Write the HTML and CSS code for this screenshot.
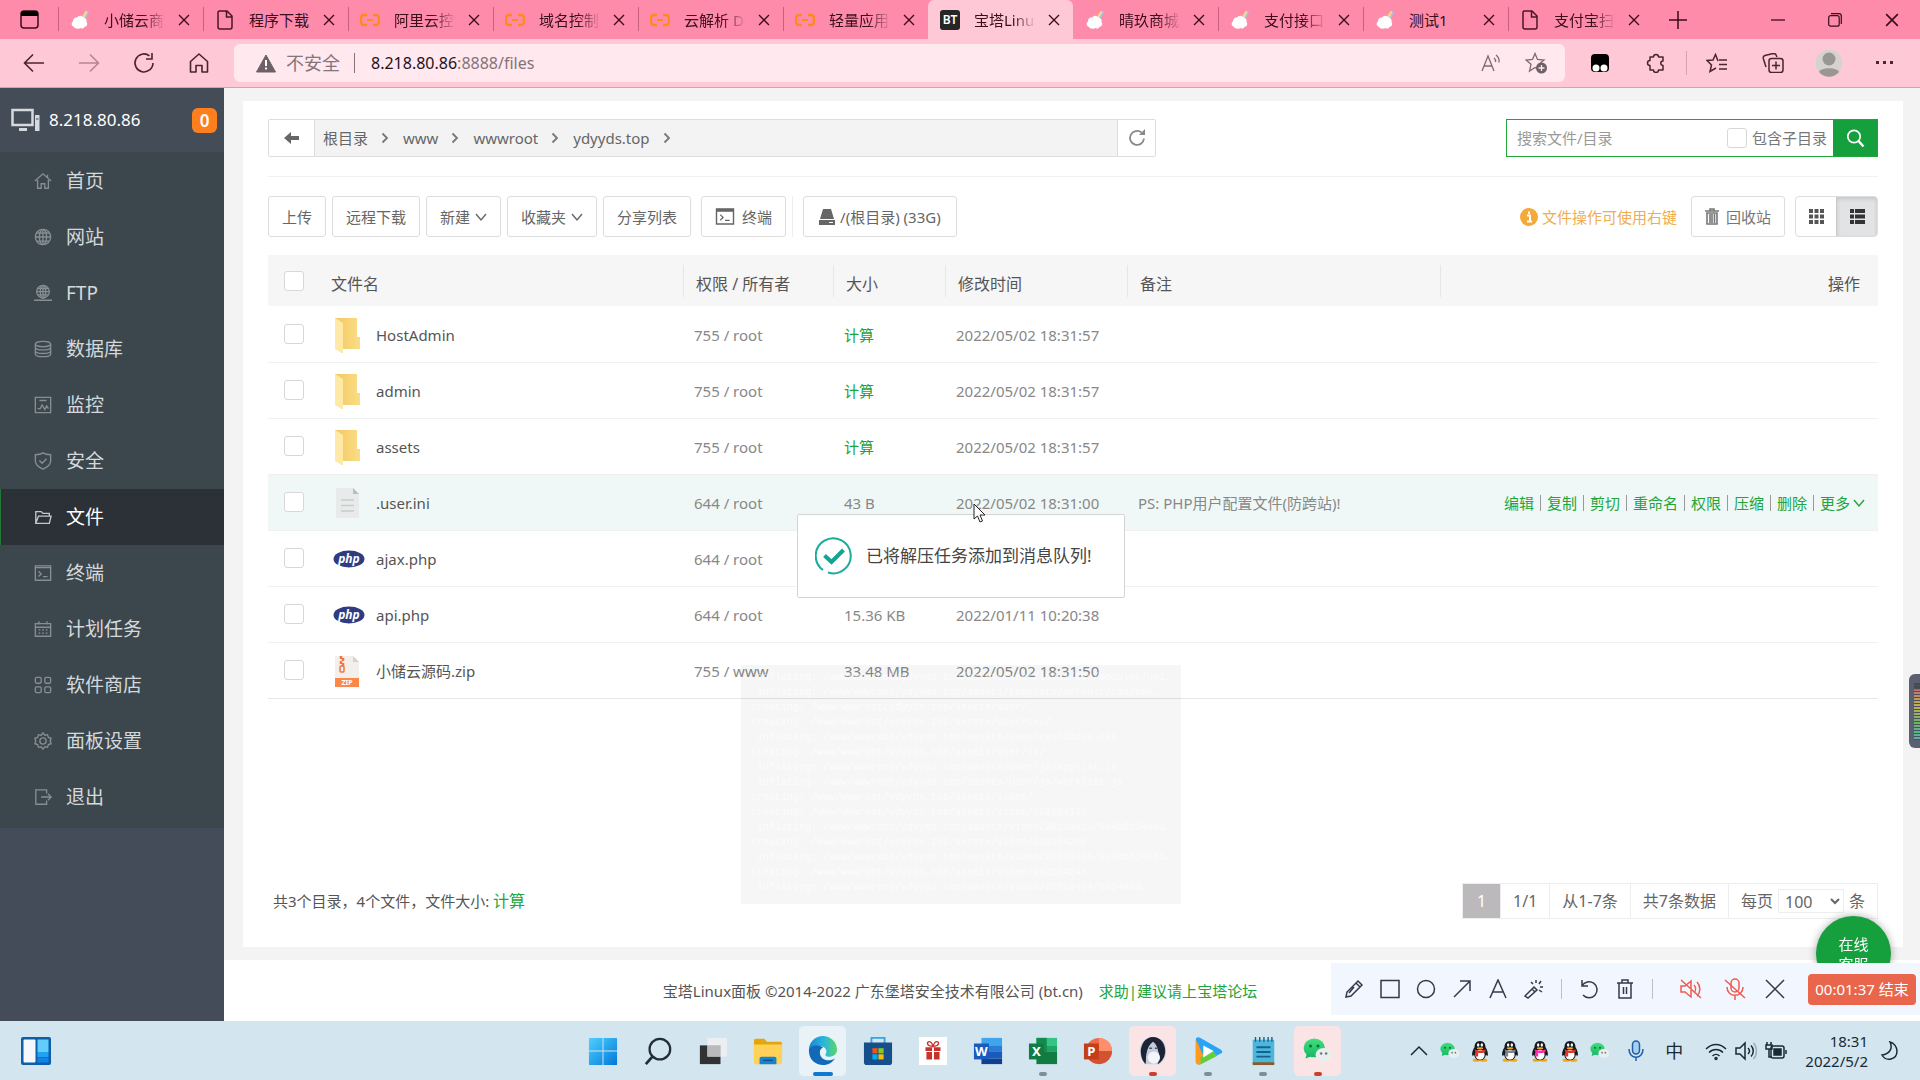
FILE: index.html
```html
<!DOCTYPE html>
<html lang="zh-CN">
<head>
<meta charset="utf-8">
<meta name="viewport" content="width=device-width, initial-scale=1">
<title>宝塔Linux面板</title>
<link rel="stylesheet" href="styles.css">
</head>
<body>
<svg class="defs" aria-hidden="true">
  <defs>
    <linearGradient id="g-win" x1="0" y1="0" x2="1" y2="1"><stop offset="0" stop-color="#4fd0ff"/><stop offset="1" stop-color="#0078d8"/></linearGradient>
    <linearGradient id="g-edge" x1="0" y1="0" x2="1" y2="0"><stop offset="0" stop-color="#1784d8"/><stop offset=".55" stop-color="#2cb8d8"/><stop offset="1" stop-color="#5bd66b"/></linearGradient>
    <linearGradient id="g-folder" x1="0" y1="0" x2="1" y2="0"><stop offset="0" stop-color="#f3c963"/><stop offset="1" stop-color="#fbdc85"/></linearGradient>
    <linearGradient id="g-wx" x1="0" y1="0" x2="0" y2="1"><stop offset="0" stop-color="#3fe07c"/><stop offset="1" stop-color="#19b868"/></linearGradient>
  </defs>
  <symbol id="i-cloud" viewBox="0 0 20 20"><path d="M10 9 15 1l1.500 0-4 9z" fill="#ffb27a"/><path d="M11.500 9 16 1l1.500.5-4 8.500z" fill="#ffe08a"/><path d="M13 9.500 17.500 1.500l1.500.5-4 8z" fill="#9cc8f5"/><path d="M4 17a3 3 0 0 1-1-5.500 3.500 3.500 0 0 1 4-4 4 4 0 0 1 6.500 0 3.500 3.500 0 0 1 3 4.500 3 3 0 0 1-2 5 3 3 0 0 1-4 1 4 4 0 0 1-3.500.5A3 3 0 0 1 4 17z" fill="#fff"/></symbol>
  <symbol id="i-doc" viewBox="0 0 20 20"><path d="M4 1h8l5 5v11a2 2 0 0 1-2 2H5a2 2 0 0 1-2-2V2zM11.500 1v6H17" fill="none" stroke="#4a1626" stroke-width="1.500"/></symbol>
  <symbol id="i-ali" viewBox="0 0 20 14"><path d="M7 2H4a3 3 0 0 0-3 3v4a3 3 0 0 0 3 3h3M13 2h3a3 3 0 0 1 3 3v4a3 3 0 0 1-3 3h-3" fill="none" stroke="#ff8a1c" stroke-width="2.400"/><path d="M7 7h6" stroke="#ff8a1c" stroke-width="2"/></symbol>
  <symbol id="i-x" viewBox="0 0 12 12"><path d="m1 1 10 10M11 1 1 11" fill="none" stroke="currentColor" stroke-width="1.400"/></symbol>
  <symbol id="i-chev" viewBox="0 0 12 12"><path d="m1 3 5 6 5-6" fill="none" stroke="currentColor" stroke-width="1.400"/></symbol>
  <symbol id="i-right" viewBox="0 0 8 12"><path d="m1.500 1.500 4.500 4.500-4.500 4.500" fill="none" stroke="currentColor" stroke-width="1.800"/></symbol>
  <symbol id="i-term" viewBox="0 0 20 18"><path d="M1 1h18v16H1z" fill="none" stroke="currentColor" stroke-width="1.500"/><path d="M1 1h18v3H1z" fill="currentColor"/><path d="m5 7 3 3-3 3M10 13h5" fill="none" stroke="currentColor" stroke-width="1.300"/></symbol>
  <symbol id="i-folder" viewBox="0 0 28 36"><path d="M2 1h22v19h3v12H5z" fill="url(#g-folder)"/><path d="m2 1 8 5v31l-8-5z" fill="#ffe9a6"/></symbol>
  <symbol id="i-php" viewBox="0 0 32 20"><ellipse cx="16" cy="10" rx="15.500" ry="8.500" fill="#2f3c82"/><text x="16" y="14" text-anchor="middle" class="php-text">php</text></symbol>
  <symbol id="i-wechat" viewBox="0 0 24 22"><ellipse cx="9" cy="8.500" rx="8.500" ry="7.500" fill="url(#g-wx)"/><path d="m3 13-1 4 5-2z" fill="#19b868"/><circle cx="6" cy="7" r="1.200" fill="#0a6b3a"/><circle cx="12" cy="7" r="1.200" fill="#0a6b3a"/><ellipse cx="16.500" cy="14" rx="6.500" ry="5.500" fill="#e9eeee"/><circle cx="14.500" cy="13" r="1" fill="#777"/><circle cx="18.500" cy="13" r="1" fill="#777"/></symbol>
  <symbol id="i-qq" viewBox="0 0 20 24"><ellipse cx="6" cy="22" rx="4" ry="1.800" fill="#f2a81d"/><ellipse cx="14" cy="22" rx="4" ry="1.800" fill="#f2a81d"/><path d="M10 1c-4 0-6 3-6 7-2 3-3 6-2.500 9 .6.500 1.500 0 2-1 1 4 3 6 6.500 6s5.500-2 6.500-6c.5 1 1.400 1.500 2 1 .5-3-.5-6-2.500-9 0-4-2-7-6-7z" fill="#15181c"/><ellipse cx="10" cy="16" rx="5" ry="5.500" fill="#fff"/><ellipse cx="8" cy="5.500" rx="1.300" ry="1.900" fill="#fff"/><ellipse cx="12" cy="5.500" rx="1.300" ry="1.900" fill="#fff"/><ellipse cx="10" cy="9" rx="3.500" ry="1.200" fill="#f2a81d"/><path d="M4 10c3 2 9 2 12 0v3c-3 1.500-6 1.500-8 1v4H5v-5z" fill="currentColor"/></symbol>
</svg>

<header class="browser">
  <div class="tabstrip">
    <button class="tab-menu" aria-label="标签页菜单"><svg width="19" height="19" viewBox="0 0 19 19"><rect x="1" y="1" width="17" height="17" rx="3" fill="none" stroke="#3a0d1a" stroke-width="1.500"/><path d="M1 6V4a3 3 0 0 1 3-3h11a3 3 0 0 1 3 3v2z" fill="#000"/></svg></button>
    <nav class="tabs" aria-label="标签页">
      <div class="tab"><svg class="fav"><use href="#i-cloud"/></svg><span class="tab-title">小储云商城</span><button class="tab-close" aria-label="关闭"><svg><use href="#i-x"/></svg></button></div>
      <div class="tab"><svg class="fav"><use href="#i-doc"/></svg><span class="tab-title whole">程序下载</span><button class="tab-close" aria-label="关闭"><svg><use href="#i-x"/></svg></button></div>
      <div class="tab"><svg class="fav"><use href="#i-ali"/></svg><span class="tab-title">阿里云控制台</span><button class="tab-close" aria-label="关闭"><svg><use href="#i-x"/></svg></button></div>
      <div class="tab"><svg class="fav"><use href="#i-ali"/></svg><span class="tab-title">域名控制台</span><button class="tab-close" aria-label="关闭"><svg><use href="#i-x"/></svg></button></div>
      <div class="tab"><svg class="fav"><use href="#i-ali"/></svg><span class="tab-title">云解析 DNS</span><button class="tab-close" aria-label="关闭"><svg><use href="#i-x"/></svg></button></div>
      <div class="tab"><svg class="fav"><use href="#i-ali"/></svg><span class="tab-title">轻量应用服务器</span><button class="tab-close" aria-label="关闭"><svg><use href="#i-x"/></svg></button></div>
      <div class="tab active"><span class="fav bt">BT</span><span class="tab-title">宝塔Linux面板</span><button class="tab-close" aria-label="关闭"><svg><use href="#i-x"/></svg></button></div>
      <div class="tab"><svg class="fav"><use href="#i-cloud"/></svg><span class="tab-title">晴玖商城后台</span><button class="tab-close" aria-label="关闭"><svg><use href="#i-x"/></svg></button></div>
      <div class="tab"><svg class="fav"><use href="#i-cloud"/></svg><span class="tab-title">支付接口设置</span><button class="tab-close" aria-label="关闭"><svg><use href="#i-x"/></svg></button></div>
      <div class="tab"><svg class="fav"><use href="#i-cloud"/></svg><span class="tab-title whole">测试1</span><button class="tab-close" aria-label="关闭"><svg><use href="#i-x"/></svg></button></div>
      <div class="tab"><svg class="fav"><use href="#i-doc"/></svg><span class="tab-title">支付宝扫码</span><button class="tab-close" aria-label="关闭"><svg><use href="#i-x"/></svg></button></div>
    </nav>
    <button class="new-tab" aria-label="新建标签页"><svg width="18" height="18" viewBox="0 0 18 18"><path d="M9 0v18M0 9h18" stroke="#3a0d1a" stroke-width="1.500"/></svg></button>
    <div class="win-controls">
      <button aria-label="最小化"><svg width="14" height="14" viewBox="0 0 14 14"><path d="M0 7h14" stroke="#3a0d1a" stroke-width="1.300"/></svg></button>
      <button aria-label="还原"><svg width="14" height="14" viewBox="0 0 14 14"><rect x=".7" y="2.700" width="10.500" height="10.500" rx="2" fill="none" stroke="#3a0d1a" stroke-width="1.200"/><path d="M3 .7h8a2.300 2.300 0 0 1 2.300 2.300v8" fill="none" stroke="#3a0d1a" stroke-width="1.200"/></svg></button>
      <button aria-label="关闭窗口"><svg width="14" height="14"><use href="#i-x"/></svg></button>
    </div>
  </div>
  <div class="toolbar">
    <button class="nav-btn" aria-label="后退"><svg width="22" height="20" viewBox="0 0 22 20"><path d="M21 10H2M10 1.500 1.500 10l8.500 8.500" fill="none" stroke="#4a2430" stroke-width="1.600"/></svg></button>
    <button class="nav-btn dim" aria-label="前进"><svg width="22" height="20" viewBox="0 0 22 20"><path d="M1 10h19M12 1.500l8.500 8.500-8.500 8.500" fill="none" stroke="#4a2430" stroke-width="1.600"/></svg></button>
    <button class="nav-btn" aria-label="刷新"><svg width="22" height="22" viewBox="0 0 22 22"><path d="M20 11a9 9 0 1 1-3.500-7.200M19 1v6h-6" fill="none" stroke="#4a2430" stroke-width="1.600"/></svg></button>
    <button class="nav-btn" aria-label="主页"><svg width="20" height="20" viewBox="0 0 20 20"><path d="M1.500 8.500 10 1l8.500 7.500V19H13v-6.500H7V19H1.500z" fill="none" stroke="#4a2430" stroke-width="1.600" stroke-linejoin="round"/></svg></button>
    <div class="address">
      <svg width="20" height="19" viewBox="0 0 20 19"><path d="M10 1 19.500 18H.5z" fill="#6d6167" stroke="#6d6167" stroke-linejoin="round"/><path d="M10 6v6M10 13.500v2" stroke="#fff" stroke-width="2"/></svg>
      <span class="unsafe">不安全</span>
      <span class="url"><b>8.218.80.86</b>:8888/files</span>
      <button class="addr-btn" aria-label="朗读"><svg width="20" height="18" viewBox="0 0 20 18"><path d="m1 17 6-15 6 15M3 12h8M13 4a4 4 0 0 1 1.500 4M15 1a8 8 0 0 1 3 7.500" fill="none" stroke="#7d6a72" stroke-width="1.300"/></svg></button>
      <button class="addr-btn" aria-label="收藏"><svg width="22" height="22" viewBox="0 0 22 22"><path d="m10 1.500 2.500 6 6.500.5-5 4.300L15.500 19 10 15.500 4.500 19 6 12.300 1 8l6.500-.5z" fill="none" stroke="#7d6a72" stroke-width="1.300"/><circle cx="16.500" cy="16" r="5.500" fill="#6d6167"/><path d="M16.500 13v6M13.500 16h6" stroke="#ffe8ee" stroke-width="1.300"/></svg></button>
    </div>
    <div class="ext">
      <button aria-label="扩展"><svg width="20" height="20" viewBox="0 0 20 20"><rect x="1" y="1" width="18" height="18" rx="4" fill="#000"/><circle cx="6" cy="15" r="3.500" fill="#fff"/><circle cx="14" cy="15" r="3.500" fill="#fff"/></svg></button>
      <button aria-label="插件"><svg width="20" height="20" viewBox="0 0 20 20"><path d="M4 4h3.500a2.500 2.500 0 1 1 5 0H17v4a2 2 0 1 0 0 4.500V17h-4.500a2.500 2.500 0 1 1-5 0H4v-4.500a2.500 2.500 0 1 1 0-5z" fill="none" stroke="#4a2430" stroke-width="1.500" stroke-linejoin="round"/></svg></button>
      <i class="ext-sep"></i>
      <button aria-label="收藏夹"><svg width="22" height="20" viewBox="0 0 22 20"><path d="M12 8 9.500 1.500 7 7l-6 .5L5.500 12 4 18.500 10 15M13 7h8M13 11.500h8M13 16h8" fill="none" stroke="#4a2430" stroke-width="1.500"/></svg></button>
      <button aria-label="集锦"><svg width="22" height="20" viewBox="0 0 22 20"><rect x="7" y="5.500" width="14" height="14" rx="2.500" fill="none" stroke="#4a2430" stroke-width="1.500"/><path d="M14 8.500v8M10 12.500h8M4 14 1.300 5.500A2.500 2.500 0 0 1 3 2.500l8-2 2.500.5L15 4" fill="none" stroke="#4a2430" stroke-width="1.500"/></svg></button>
      <button aria-label="个人资料"><svg width="28" height="28" viewBox="0 0 28 28"><circle cx="14" cy="14" r="13.500" fill="#d6d2d0"/><circle cx="14" cy="10" r="6.500" fill="#999694"/><path d="M4 23c2-5 18-5 20 0a13 13 0 0 1-20 0z" fill="#999694"/></svg></button>
      <button aria-label="更多"><svg width="18" height="4" viewBox="0 0 18 4"><path d="M0 0h3v3H0zM7 0h3v3H7zM14 0h3v3h-3z" fill="#4a2430"/></svg></button>
    </div>
  </div>
</header>

<div class="page">
  <aside class="sidebar">
    <div class="host">
      <svg width="29" height="24" viewBox="0 0 29 24"><path d="M1.500 2h20v15h-20z" fill="none" stroke="#d6dade" stroke-width="2.500"/><path d="M8 20h8v3H8zM24 7h4.500v16H24z" fill="#d6dade"/><path d="M25 11h2.500" stroke="#444c5a"/></svg>
      <span class="host-ip">8.218.80.86</span><span class="host-count">0</span>
    </div>
    <nav class="menu" aria-label="面板菜单">
      <a href="#"><svg viewBox="0 0 20 20"><path d="M1 10 10 2l9 8M4 9v9h4v-5h4v5h4V9M15 6V3"/></svg>首页</a>
      <a href="#"><svg viewBox="0 0 20 20"><circle cx="10" cy="10" r="8.500"/><ellipse cx="10" cy="10" rx="4" ry="8.500"/><path d="M1.500 10h17M3 5.500h14M3 14.500h14M10 1.500v17"/></svg>网站</a>
      <a href="#"><svg viewBox="0 0 20 20"><circle cx="10" cy="8.500" r="7"/><ellipse cx="10" cy="8.500" rx="3" ry="7"/><path d="M3 8.500h14M4 5h12M4 12h12M10 1.500v14M0 18h20M7 18h6" /></svg>FTP</a>
      <a href="#"><svg viewBox="0 0 20 20"><ellipse cx="10" cy="4.500" rx="8.500" ry="3"/><path d="M1.500 4.500v11c0 4 17 4 17 0v-11M1.500 8c0 4 17 4 17 0M1.500 12c0 4 17 4 17 0"/></svg>数据库</a>
      <a href="#"><svg viewBox="0 0 20 20"><path d="M1.500 1.500h17v17h-17zM6 5h8M4 14h3l2-4 3 5 2-4 2 3"/></svg>监控</a>
      <a href="#"><svg viewBox="0 0 20 20"><path d="M10 1c3 2 6 2 8.500 2v7c0 4-4 7-8.500 9-4.500-2-8.500-5-8.500-9V3C4 3 7 3 10 1zM6 9.500l3 3 5-5"/></svg>安全</a>
      <a href="#" class="current" aria-current="page"><svg viewBox="0 0 20 20"><path d="M2 17V4h6l2 2h7v3M2 17 5 9h14l-2 8z"/></svg>文件</a>
      <a href="#"><svg viewBox="0 0 20 20"><path d="M1.500 2h17v16h-17zM1.500 4h17M5 8l3 3-3 3M10 14h5"/></svg>终端</a>
      <a href="#"><svg viewBox="0 0 20 20"><path d="M1.500 4h17v14h-17zM1.500 8h17M5.500 1.500V5M14.500 1.500V5M5 11h2M9 11h2M13 11h2M5 14.500h2M9 14.500h2M13 14.500h2"/></svg>计划任务</a>
      <a href="#"><svg viewBox="0 0 20 20"><rect x="1.500" y="1.500" width="6.500" height="6.500" rx="1.500"/><rect x="12" y="1.500" width="6.500" height="6.500" rx="1.500"/><rect x="1.500" y="12" width="6.500" height="6.500" rx="1.500"/><rect x="12" y="12" width="6.500" height="6.500" rx="1.500"/></svg>软件商店</a>
      <a href="#"><svg viewBox="0 0 20 20"><path d="m10 1 2 2.500 3-.5 1 3 3 1-1 3 1 3-3 1-1 3-3-.5L10 19l-2-2.500-3 .5-1-3-3-1 1-3-1-3 3-1 1-3 3 .5z"/><circle cx="10" cy="10" r="3.500"/></svg>面板设置</a>
      <a href="#"><svg viewBox="0 0 20 20"><path d="M14 6V2H2v16h12v-4M8 10h11M15.500 6.500 19 10l-3.500 3.500"/></svg>退出</a>
    </nav>
  </aside>

  <div class="content">
    <main class="card">
      <div class="path-row">
        <div class="path">
          <button class="path-back" aria-label="返回"><svg width="16" height="12" viewBox="0 0 16 12"><path d="M0 6 7 0v4h8v4H7v4z" fill="#666"/></svg></button>
          <div class="crumbs">
            <a href="#">根目录</a><svg><use href="#i-right"/></svg><a href="#">www</a><svg><use href="#i-right"/></svg><a href="#">wwwroot</a><svg><use href="#i-right"/></svg><a href="#">ydyyds.top</a><svg><use href="#i-right"/></svg>
          </div>
          <button class="path-reload" aria-label="刷新目录"><svg width="18" height="18" viewBox="0 0 18 18"><path d="M16 9.500A7 7 0 1 1 13.500 3.500" fill="none" stroke="#888" stroke-width="1.800"/><path d="M11 6h6V0z" fill="#888"/></svg></button>
        </div>
        <form class="search">
          <input type="text" placeholder="搜索文件/目录" aria-label="搜索文件/目录">
          <label class="search-sub"><input type="checkbox">包含子目录</label>
          <button type="button" aria-label="搜索"><svg width="19" height="19" viewBox="0 0 19 19"><circle cx="8" cy="7.500" r="6.200" fill="none" stroke="#fff" stroke-width="1.700"/><path d="m12.500 12 5 5.500" stroke="#fff" stroke-width="2.400"/></svg></button>
        </form>
      </div>

      <div class="actions">
        <button class="btn">上传</button>
        <button class="btn">远程下载</button>
        <button class="btn">新建<svg class="caret"><use href="#i-chev"/></svg></button>
        <button class="btn">收藏夹<svg class="caret"><use href="#i-chev"/></svg></button>
        <button class="btn">分享列表</button>
        <button class="btn term"><svg width="20" height="17"><use href="#i-term"/></svg>终端</button>
        <i class="act-sep"></i>
        <button class="btn disk"><svg width="16" height="16" viewBox="0 0 16 16"><path d="M4 0h8l3 10H1zM0 11h16v5H0z" fill="#666"/><path d="M10 13.500h4" stroke="#fff"/></svg>/(根目录) (33G)</button>
        <span class="hint"><svg width="18" height="18" viewBox="0 0 18 18"><circle cx="9" cy="9" r="9" fill="#f5a93b"/><path d="M7 7.500h3V13M7 13.500h5M9 3.500v2.500" stroke="#fff" stroke-width="2" fill="none"/></svg>文件操作可使用右键</span>
        <button class="btn recycle"><svg width="14" height="17" viewBox="0 0 14 17"><path d="M0 3h14M5 3V1h4v2M2 5h10v11H2zM5 6v9M7 6v9M9.500 6v9" fill="none" stroke="#777" stroke-width="1.600"/></svg>回收站</button>
        <div class="views">
          <button aria-label="图标视图"><svg width="15" height="15" viewBox="0 0 15 15"><path d="M0 0h4v4H0zM5.500 0h4v4h-4zM11 0h4v4h-4zM0 5.500h4v4H0zM5.500 5.500h4v4h-4zM11 5.500h4v4h-4zM0 11h4v4H0zM5.500 11h4v4h-4zM11 11h4v4h-4z" fill="#555"/></svg></button>
          <button class="on" aria-label="列表视图"><svg width="15" height="15" viewBox="0 0 15 15"><path d="M0 0h4v4H0zM5 0h10v4H5zM0 5.500h4v4H0zM5 5.500h10v4H5zM0 11h4v4H0zM5 11h10v4H5z" fill="#333"/></svg></button>
        </div>
      </div>

      <table class="files">
        <colgroup><col class="c-check"><col class="c-name"><col class="c-perm"><col class="c-size"><col class="c-time"><col class="c-note"><col></colgroup>
        <thead><tr><th><input type="checkbox" aria-label="全选"></th><th>文件名</th><th>权限 / 所有者</th><th>大小</th><th>修改时间</th><th>备注</th><th>操作</th></tr></thead>
        <tbody>
          <tr><td><input type="checkbox" aria-label="HostAdmin"></td><td><div class="fname"><svg class="fi"><use href="#i-folder"/></svg>HostAdmin</div></td><td>755 / root</td><td><a href="#">计算</a></td><td>2022/05/02 18:31:57</td><td></td><td></td></tr>
          <tr><td><input type="checkbox" aria-label="admin"></td><td><div class="fname"><svg class="fi"><use href="#i-folder"/></svg>admin</div></td><td>755 / root</td><td><a href="#">计算</a></td><td>2022/05/02 18:31:57</td><td></td><td></td></tr>
          <tr><td><input type="checkbox" aria-label="assets"></td><td><div class="fname"><svg class="fi"><use href="#i-folder"/></svg>assets</div></td><td>755 / root</td><td><a href="#">计算</a></td><td>2022/05/02 18:31:57</td><td></td><td></td></tr>
          <tr class="hover"><td><input type="checkbox" aria-label=".user.ini"></td><td><div class="fname"><svg class="fi" viewBox="0 0 28 36"><path d="M3 3h17l6 6v24H3z" fill="#e9ebeb"/><path d="M20 3v6h6z" fill="#b9bdbd"/><path d="M8 15h13M8 20.500h13M8 26h13" stroke="#c9cdcd" stroke-width="1.500"/></svg>.user.ini</div></td><td>644 / root</td><td>43 B</td><td>2022/05/02 18:31:00</td><td>PS: PHP用户配置文件(防跨站)!</td>
            <td><div class="ops"><a href="#">编辑</a><a href="#">复制</a><a href="#">剪切</a><a href="#">重命名</a><a href="#">权限</a><a href="#">压缩</a><a href="#">删除</a><a href="#">更多<svg class="caret"><use href="#i-chev"/></svg></a></div></td></tr>
          <tr><td><input type="checkbox" aria-label="ajax.php"></td><td><div class="fname"><svg class="fi wide"><use href="#i-php"/></svg>ajax.php</div></td><td>644 / root</td><td></td><td></td><td></td><td></td></tr>
          <tr><td><input type="checkbox" aria-label="api.php"></td><td><div class="fname"><svg class="fi wide"><use href="#i-php"/></svg>api.php</div></td><td>644 / root</td><td>15.36 KB</td><td>2022/01/11 10:20:38</td><td></td><td></td></tr>
          <tr><td><input type="checkbox" aria-label="小储云源码.zip"></td><td><div class="fname"><svg class="fi" viewBox="0 0 28 36"><path d="M2 3h18l6 6v16H2z" fill="#f3efec"/><path d="M20 3v6h6z" fill="#d8d2ce"/><path d="M8 3v3M10 5v3M8 8v3M10 10v3" stroke="#f0763f" stroke-width="2.500"/><rect x="7" y="13" width="4" height="6" rx="1" fill="none" stroke="#f0763f" stroke-width="1.500"/><path d="M2 25h24v9H2z" fill="#fb8748"/><text x="14" y="32" text-anchor="middle" class="zip-text">ZIP</text></svg>小储云源码.zip</div></td><td>755 / www</td><td>33.48 MB</td><td>2022/05/02 18:31:50</td><td></td><td></td></tr>
        </tbody>
      </table>

      <div class="summary">
        <p>共3个目录，4个文件，文件大小: <a href="#">计算</a></p>
        <div class="pager">
          <span class="page-now">1</span><span>1/1</span><span>从1-7条</span><span>共7条数据</span>
          <label>每页<select><option>100</option></select>条</label>
        </div>
      </div>
    </main>
    <footer class="copyright">宝塔Linux面板 ©2014-2022 广东堡塔安全技术有限公司 (bt.cn)<a href="#">求助|建议请上宝塔论坛</a></footer>
  </div>
</div>

<pre class="console">
 inflating: /www/wwwroot/ydyyds.top/assets/user/layui/css/modules/uni…
 inflating: /www/wwwroot/ydyyds.top/assets/template/default/css/use…
creating: /www/wwwroot/ydyyds.top/assets/user/
creating: /www/wwwroot/ydyyds.top/assets/user/css/
 inflating: /www/wwwroot/ydyyds.top/assets/user/css/index.css
creating: /www/wwwroot/ydyyds.top/assets/user/js/
 inflating: /www/wwwroot/ydyyds.top/assets/user/js/applist.js
 inflating: /www/wwwroot/ydyyds.top/assets/user/js/worklist.js
creating: /www/wwwroot/ydyyds.top/assets/video/
creating: /www/wwwroot/ydyyds.top/assets/video/20210413/
 inflating: /www/wwwroot/ydyyds.top/assets/video/20210413/0a4b5d24e63…
creating: /www/wwwroot/ydyyds.top/assets/video/20210420/
 inflating: /www/wwwroot/ydyyds.top/assets/video/20210420/0a4b5b24863…
creating: /www/wwwroot/ydyyds.top/assets/video/20210424/
 inflating: /www/wwwroot/ydyyds.top/assets/video/20210424/0b24863…
</pre>

<div class="toast" role="status">
  <svg width="38" height="38" viewBox="0 0 38 38"><path d="M8 33A17.500 17.500 0 1 1 13 35.500" fill="none" stroke="#1aab9b" stroke-width="2"/><path d="m9.500 18.500 7 6.500L28.500 13" fill="none" stroke="#12a594" stroke-width="4"/></svg>
  已将解压任务添加到消息队列!
</div>
<svg class="cursor" width="13" height="20" viewBox="0 0 13 20"><path d="M1 1v15l3.500-3 2.500 6 2.500-1L7 12h5z" fill="#fff" stroke="#222"/></svg>

<div class="meter" aria-hidden="true"><i></i></div>
<button class="service">在线<br>客服</button>

<div class="recorder" role="toolbar" aria-label="录制工具">
  <button aria-label="画笔"><svg viewBox="0 0 20 20"><path d="m2 18 1-5L14 2l4 4L7 17zM12 4l4 4M10 8l-5 6"/></svg></button>
  <button aria-label="矩形"><svg viewBox="0 0 20 20"><path d="M1 1.500h18v17H1z"/></svg></button>
  <button aria-label="圆形"><svg viewBox="0 0 20 20"><circle cx="10" cy="10" r="8.500"/></svg></button>
  <button aria-label="箭头"><svg viewBox="0 0 20 20"><path d="M2 18 18 2M8 2h10v10"/></svg></button>
  <button aria-label="文字"><svg viewBox="0 0 20 20"><path d="M2 19 10 1l8 18M5 13h10"/></svg></button>
  <button aria-label="魔法棒"><svg viewBox="0 0 20 20"><path d="m1 17 9-9 3 3-9 8zM8 10l3 3M12 1v3M7 3l2 2M15 5l2-3M16 8h3M15 11l3 2"/></svg></button>
  <i class="rec-sep"></i>
  <button aria-label="撤销"><svg viewBox="0 0 20 20"><path d="M3 1v6h6M3 7a8 8 0 1 1 1 9"/></svg></button>
  <button aria-label="清除"><svg viewBox="0 0 20 20"><path d="M2 4h16M7 4V1h6v3M4 4v15h12V4M8.500 8v7M11.500 8v7"/></svg></button>
  <i class="rec-sep last"></i>
  <button class="red" aria-label="静音"><svg viewBox="0 0 22 22"><path d="M1 8h4l6-5v16l-6-5H1zM14 7a6 6 0 0 1 0 8M17 4a10 10 0 0 1 0 14M1 2l20 18"/></svg></button>
  <button class="red" aria-label="麦克风"><svg viewBox="0 0 22 22"><rect x="7" y="1" width="8" height="13" rx="4"/><path d="M3 9c0 11 16 11 16 0M11 17v5M1 2l20 18"/></svg></button>
  <button aria-label="关闭"><svg viewBox="0 0 20 20"><path d="m1 1 18 18M19 1 1 19"/></svg></button>
  <button class="stop">00:01:37 结束</button>
</div>

<footer class="taskbar">
  <button class="widgets" aria-label="小组件"><svg width="30" height="28" viewBox="0 0 30 28"><rect width="30" height="28" rx="2" fill="#0f5ea8"/><rect x="2.500" y="2.500" width="12" height="23" rx="1" fill="#f4f7fb"/><path d="M16.500 2.500h11V15h-11z" fill="#62ccfb"/><path d="M16.500 15h11v5h-11z" fill="#20a2f2"/><path d="M16.500 20.500h11v5h-11z" fill="#0f83e8"/></svg></button>
  <div class="apps">
    <button class="app" aria-label="开始"><svg viewBox="0 0 32 32"><path d="M1 3a1 1 0 0 1 1-1h13.500v13.500H1zM16.500 2H30a1 1 0 0 1 1 1v12.500H16.500zM1 16.500h14.500V31H2a1 1 0 0 1-1-1zM16.500 16.500H31V30a1 1 0 0 1-1 1H16.500z" fill="url(#g-win)"/></svg></button>
    <button class="app" aria-label="搜索"><svg viewBox="0 0 32 32"><circle cx="18" cy="14" r="11" fill="none" stroke="#222d35" stroke-width="2.400"/><path d="m10 22-7 8" stroke="#222d35" stroke-width="3"/></svg></button>
    <button class="app" aria-label="任务视图"><svg viewBox="0 0 32 32"><path d="M2 10h22v20H2z" fill="#303234"/><path d="M10 2h21v20H10z" fill="#eef0f1" opacity=".85"/><path d="M10 10h14v12H10z" fill="#b8babb"/></svg></button>
    <button class="app" aria-label="文件资源管理器"><svg viewBox="0 0 32 32"><path d="M1 5a2 2 0 0 1 2-2h9l3 3h14a2 2 0 0 1 2 2v10H1z" fill="#e5a50f"/><path d="M1 9h30v19a2 2 0 0 1-2 2H3a2 2 0 0 1-2-2z" fill="#ffd257"/><path d="M7 30v-6a2 2 0 0 1 2-2h14a2 2 0 0 1 2 2v6z" fill="#1682d4"/><path d="M11 26h10" stroke="#0b4f8a" stroke-width="1.500"/></svg></button>
    <button class="app open" aria-label="Edge"><svg viewBox="0 0 32 32"><path d="M1 16A15 15 0 0 1 31 14c0 6-4 8-9 8-3 0-4-1-3-3 2-4-1-8-6-8-6 0-11 4-12 5z" fill="url(#g-edge)"/><path d="M1 16c0 9 7 15 15 15 6 0 10-3 13-7-5 3-14 3-16-4-1-4 0-6 3-8C9 8 1 11 1 16z" fill="#1269b8"/></svg></button>
    <button class="app" aria-label="应用商店"><svg viewBox="0 0 32 32"><path d="M9 8V2h14v6" fill="none" stroke="#33a5e6" stroke-width="2"/><path d="M1 7h30v21a3 3 0 0 1-3 3H4a3 3 0 0 1-3-3z" fill="#164f8c"/><path d="M10 13h5.500v5.500H10z" fill="#f1511b"/><path d="M16.500 13H22v5.500h-5.500z" fill="#80cc28"/><path d="M10 19.500h5.500V25H10z" fill="#00adef"/><path d="M16.500 19.500H22V25h-5.500z" fill="#fbbc09"/></svg></button>
    <button class="app" aria-label="礼物"><svg viewBox="0 0 32 32"><path d="M1 1h30v30H1z" fill="#fff"/><path d="M8 12h7v4H8zM17 12h7v4h-7zM9 17h6v8H9zM17 17h6v8h-6z" fill="#c8322c"/><path d="M16 11c-7 0-7-5-4-5 2 0 3 2 4 5 1-3 2-5 4-5 3 0 3 5-4 5z" fill="none" stroke="#c8322c" stroke-width="1.500"/></svg></button>
    <button class="app" aria-label="Word"><svg viewBox="0 0 32 32"><path d="M9 2h22v8H9z" fill="#41a5ee"/><path d="M9 10h22v7H9z" fill="#2b7cd3"/><path d="M9 17h22v7H9z" fill="#185abd"/><path d="M9 24h22v6H9z" fill="#103f91"/><path d="M1 8h16v17H1z" fill="#1b5bbd"/><text x="9" y="21" text-anchor="middle" class="office-text">W</text></svg></button>
    <button class="app running" aria-label="Excel"><svg viewBox="0 0 32 32"><path d="M9 2h22v8H9z" fill="#33c481"/><path d="M9 10h22v7H9z" fill="#21a366"/><path d="M9 17h22v13H9z" fill="#107c41"/><path d="M9 2h11v15H9z" fill="#158a50"/><path d="M1 8h16v17H1z" fill="#107c41"/><text x="9" y="21" text-anchor="middle" class="office-text">X</text></svg></button>
    <button class="app" aria-label="PowerPoint"><svg viewBox="0 0 32 32"><circle cx="17" cy="16" r="14" fill="#ed6c47"/><path d="M17 2a14 14 0 0 1 14 14H17z" fill="#ff8f6b"/><path d="M31 16a14 14 0 0 1-27 5l13-5z" fill="#d35230"/><path d="M1 8h16v17H1z" fill="#c43e1c"/><text x="9" y="21" text-anchor="middle" class="office-text">P</text></svg></button>
    <button class="app alert" aria-label="聊天"><svg viewBox="0 0 32 32"><path d="M16 1c9 0 14 7 14 15 0 6-3 11-7 14H9C5 27 2 22 2 16 2 8 7 1 16 1z" fill="#c3ccdd"/><path d="M16 1C8 1 4 8 3 15c0 6 1 11 5 15 1-4 0-7 1-11 1-6 3-10 7-13 4 3 5 7 6 12 1 4 0 8-1 12 5-3 8-8 8-14C29 8 24 1 16 1z" fill="#1c2333"/><path d="M12 13h3M18 13h3" stroke="#4b5468" stroke-width="1.500"/><circle cx="17" cy="23" r="6.500" fill="#f3f5fa"/></svg></button>
    <button class="app running" aria-label="视频"><svg viewBox="0 0 32 32"><path d="M3 4c0-3 3-3 5-2l21 12c3 2 3 4 0 5L8 30c-3 1-5 0-5-3z" fill="#2aa3f5"/><path d="M3 4v23c0 3 2 4 5 3l8-4C8 20 8 11 3 4z" fill="#ff9a1f"/><path d="m8 30 18-9-6-6L8 23z" fill="#62cf3a"/><path d="m11 10 11 6-11 7z" fill="#fff"/></svg></button>
    <button class="app running" aria-label="记事本"><svg viewBox="0 0 32 32"><path d="M5 4h23v26H5z" fill="#4db6dc"/><path d="M5 28h23v3H5z" fill="#8a5a2a"/><path d="M8 1v5M12.500 1v5M17 1v5M21.500 1v5M25.500 1v5" stroke="#1c5f85" stroke-width="1.500"/><path d="M9 12h15M9 17h15M9 22h15" stroke="#12638e" stroke-width="2"/></svg></button>
    <button class="app alert" aria-label="微信"><svg viewBox="0 0 24 24"><use href="#i-wechat" width="24" height="24"/></svg></button>
  </div>
  <div class="tray">
    <svg class="t-up" viewBox="0 0 18 18"><path d="m1 13 8-8 8 8"/></svg>
    <svg class="t-ic"><use href="#i-wechat"/></svg>
    <svg class="t-ic qq-red"><use href="#i-qq"/></svg>
    <svg class="t-ic qq-gray"><use href="#i-qq"/></svg>
    <svg class="t-ic qq-pink"><use href="#i-qq"/></svg>
    <svg class="t-ic qq-red"><use href="#i-qq"/></svg>
    <svg class="t-ic"><use href="#i-wechat"/></svg>
    <svg class="t-mic" viewBox="0 0 18 22"><rect x="5.500" y="1" width="7" height="13" rx="3.500" fill="#a9cdec"/><path d="M2 9c0 11 14 11 14 0M9 17v4"/></svg>
    <span class="ime">中</span>
    <svg class="t-sys" viewBox="0 0 22 20"><path d="M1 8c6-6 14-6 20 0M4 11.500c4-4 10-4 14 0M7.500 15c2-2 5-2 7 0"/><circle cx="11" cy="17.500" r="1"/></svg>
    <svg class="t-sys" viewBox="0 0 22 20"><path d="M1 7h4l5-5v16l-5-5H1zM13 7c2 2 2 4 0 6M16 4.500c3 3 3 8 0 11"/><path d="M18.500 2c4 4 4 12 0 16" opacity=".3"/></svg>
    <svg class="t-sys" viewBox="0 0 22 20"><rect x="6" y="5" width="13" height="12" rx="2"/><path d="M9 8h7v6H9z" fill="#1a2a35"/><path d="M21 9v4M1 4h6v4H1zM2 1v3M6 1v3M4 8v8h3" /></svg>
    <time class="clock"><span>18:31</span><span>2022/5/2</span></time>
    <svg class="t-moon" viewBox="0 0 18 20"><path d="M10 1c3 6 0 12-8 13 4 7 15 5 15-4 0-4-3-8-7-9z"/></svg>
  </div>
</footer>
</body>
</html>
```
FILE: styles.css
```css
* { box-sizing: border-box; }

body {
  margin: 0;
  min-height: 100vh;
  display: flex;
  flex-direction: column;
  font: 15px/20px "Noto Sans", "Noto Sans CJK SC", sans-serif;
  color: #666;
  background: #f3f3f3;
  overflow-x: hidden;
}

button, input, select { font: inherit; color: inherit; margin: 0; }
button { border: 0; background: none; padding: 0; display: flex; align-items: center; justify-content: center; white-space: nowrap; }
svg { display: block; flex: none; }
a { color: #20a53a; text-decoration: none; }
.defs { position: absolute; width: 0; height: 0; }

/* Browser frame */
.tabstrip { display: flex; height: 39px; background: #ff8bab; color: #3a0d1a; }
.tab-menu { width: 58px; }
.tabs { display: flex; }
.tab { width: 145px; display: flex; align-items: center; padding: 0 12px; position: relative; }
.tab::before { content: ""; position: absolute; left: 0; top: 7px; width: 1px; height: 24px; background: #c9607f; }
.tab.active { background: #ffc8d6; border-radius: 6px 6px 0 0; }
.tab.active::before, .tab.active + .tab::before { display: none; }
.fav { width: 20px; height: 20px; margin-right: 14px; flex: none; }
.fav.bt { background: #262626; color: #fff; border-radius: 3px; font-size: 12px; text-align: center; font-weight: 600; }
.tab-title {
  width: 62px; overflow: hidden; white-space: nowrap;
  -webkit-mask-image: linear-gradient(90deg, #000 62%, transparent);
  mask-image: linear-gradient(90deg, #000 62%, transparent);
}
.tab-title.whole { -webkit-mask-image: none; mask-image: none; }
.tab-close { width: 12px; height: 12px; margin-left: 12px; }
.tab-close svg { width: 12px; height: 12px; }
.new-tab { width: 50px; }
.win-controls { display: flex; margin-left: auto; }
.win-controls button { width: 57px; }

.toolbar { display: flex; align-items: center; height: 49px; background: #ffc8d6; border-bottom: 1px solid #d3a3b1; padding: 0 7px 0 6px; }
.nav-btn { width: 55px; height: 38px; }
.dim { opacity: .4; }
.address { flex: 1; height: 38px; margin-left: 8px; border-radius: 6px; background: #ffe8ee; display: flex; align-items: center; padding: 0 18px 0 22px; }
.unsafe { font-size: 18px; margin-left: 10px; color: #85747b; padding-right: 14px; border-right: 1px solid #85747b; }
.url { font-size: 16px; margin: 0 auto 0 16px; color: #85747b; }
.url b { font-weight: 400; color: #24121a; }
.addr-btn { margin-left: 24px; }
.ext { display: flex; align-items: center; padding-left: 7px; }
.ext button { width: 56px; height: 38px; }
.ext-sep { width: 1px; height: 24px; background: #dc9fb1; margin: 0 2px; }

/* Panel */
.page { flex: 1; display: flex; }
.sidebar { width: 224px; flex: none; background: #444b59; }
.host { height: 64px; display: flex; align-items: center; padding: 0 7px 0 11px; color: #fff; background: #444c58; }
.host-ip { font-size: 17px; margin-left: 9px; }
.host-count { margin-left: auto; width: 25px; height: 25px; border-radius: 6px; background: #ff7f1f; font: 600 17px/25px "Noto Sans", sans-serif; text-align: center; }
.menu { background: #3c474d; padding: 1px 0 3px; }
.menu a { display: flex; align-items: center; height: 56px; padding-left: 32px; gap: 13px; color: #d5d9dc; font-size: 19px; border-left: 1px solid transparent; }
.menu svg { width: 20px; height: 18px; fill: none; stroke: #868d93; stroke-width: 1.500; }
.menu a.current { background: #2c3138; color: #fff; border-left-color: #1e7a35; }
.menu a.current svg { stroke: #c3c7cb; }

.content { flex: 1; min-width: 0; display: flex; flex-direction: column; }
.card { flex: 1; margin: 13px 17px 13px 19px; padding: 18px 25px 28px; background: #fff; display: flex; flex-direction: column; }
.path-row { display: flex; justify-content: space-between; padding-bottom: 19px; border-bottom: 1px solid #f0f0f0; }
.path { display: flex; width: 888px; height: 38px; border: 1px solid #ddd; border-radius: 2px; }
.path-back { width: 46px; border-right: 1px solid #ddd; }
.crumbs { flex: 1; display: flex; align-items: center; background: #f3f3f3; padding-left: 8px; }
.crumbs a { color: #666; }
.crumbs svg { width: 8px; height: 12px; margin: 0 14px 0 13px; color: #777; }
.path-reload { width: 38px; border-left: 1px solid #ddd; }
.search { display: flex; width: 372px; height: 38px; border: 1px solid #20a53a; }
.search input[type="text"] { flex: 1; min-width: 0; border: 0; padding: 0 10px; outline: 0; background: none; }
.search input::placeholder { color: #999; }
.search-sub { display: flex; align-items: center; gap: 5px; margin-right: 6px; color: #777; }
.search button { width: 44px; background: #169f3d; }

input[type="checkbox"] { appearance: none; display: block; flex: none; width: 20px; height: 20px; border: 1px solid #d8d8d8; border-radius: 3px; background: #fff; }

.actions { display: flex; align-items: center; padding: 19px 0 18px; gap: 6px; }
.btn { height: 41px; padding: 0 13px; border: 1px solid #ddd; border-radius: 3px; background: #fff; color: #666; gap: 5px; }
.caret { width: 12px; height: 12px; }
.term { margin-left: 4px; gap: 7px; }
.act-sep { width: 1px; height: 41px; background: #eee; }
.disk { margin-left: 4px; padding: 0 15px; }
.hint { display: flex; align-items: center; gap: 4px; margin-left: auto; margin-right: 8px; color: #f0ad4e; }
.recycle { gap: 7px; color: #777; }
.views { display: flex; margin-left: 4px; border: 1px solid #ddd; border-radius: 4px; overflow: hidden; }
.views button { width: 40px; height: 39px; }
.views .on { width: 41px; background: #e2e3e5; border-left: 1px solid #ccc; box-shadow: inset 0 2px 4px #0002; }

.files { width: 100%; table-layout: fixed; border-collapse: collapse; }
.c-check { width: 55px; }
.c-name { width: 361px; }
.c-perm { width: 150px; }
.c-size { width: 112px; }
.c-time { width: 182px; }
.c-note { width: 313px; }
.files th { height: 51px; padding: 6px 0 0 12px; text-align: left; font-size: 16px; font-weight: 400; color: #555; background: linear-gradient(#e6e6e6, #e6e6e6) right 10px / 1px 32px no-repeat #f6f6f6; }
.files th:nth-child(1), .files th:last-child { background: #f6f6f6; }
.files th:nth-child(1) { padding: 0 0 0 16px; }
.files th:nth-child(2) { padding-left: 8px; }
.files th:last-child { text-align: right; padding-right: 18px; }
.files td { height: 56px; padding: 2px 0 0 10px; border-bottom: 1px solid #f0f0f0; color: #888; white-space: nowrap; }
.files td:first-child { padding: 0 0 0 16px; }
.files tr:last-child td { border-bottom-color: #e6e6e6; }
.files .hover { background: #eff8f7; }
.fname { display: flex; align-items: center; color: #555; }
.fi { width: 28px; height: 36px; margin-right: 15px; }
.fi.wide { width: 32px; height: 20px; margin-right: 11px; }
.php-text { font: italic 700 12px "Noto Sans", sans-serif; fill: #fff; }
.zip-text { font: 700 7px "Noto Sans", sans-serif; fill: #fff; }
.ops { display: flex; justify-content: flex-end; padding-right: 13px; }
.ops a { display: flex; align-items: center; line-height: 16px; }
.ops a + a { margin-left: 6px; padding-left: 6px; border-left: 1px solid #999; }
.ops .caret { margin-left: 3px; }

.summary { display: flex; justify-content: space-between; align-items: center; margin-top: auto; padding-left: 5px; }
.summary p { margin: 0; color: #555; }
.summary p a { font-size: 16px; }
.pager { display: flex; height: 36px; font-size: 16px; border: 1px solid #eee; }
.pager span, .pager label { display: flex; align-items: center; padding: 0 12px; border-right: 1px solid #eee; }
.pager label { border-right: 0; gap: 5px; }
.pager .page-now { background: #bcb9bd; color: #fff; padding: 0 14px; }
.pager select { width: 66px; height: 24px; padding: 0 0 0 2px; border: 1px solid #eee; background: #fff; }

.copyright { height: 61px; background: #fff; display: flex; align-items: center; justify-content: center; gap: 16px; padding-right: 224px; color: #555; }

/* Fading unzip log */
.console {
  position: fixed; left: 741px; top: 665px; width: 440px; height: 239px; margin: 0; padding: 5px 10px;
  background: #00000009; color: #ffffff80; font: 10px/15px "Liberation Mono", monospace; overflow: hidden;
}

.toast {
  position: fixed; left: 50%; top: 514px; width: 328px; height: 84px; margin-left: -163px; padding-left: 17px;
  display: flex; align-items: center; gap: 13px; background: #fff; border: 1px solid #d3d4d3; border-radius: 2px;
  font-size: 17px; color: #444; white-space: nowrap;
}
.cursor { position: fixed; left: 973px; top: 503px; }

.meter { position: fixed; right: 0; top: 674px; width: 11px; height: 74px; padding: 9px 0 8px 5px; background: #5a6070; border-radius: 6px 0 0 6px; }
.meter i { display: block; height: 100%; background: repeating-linear-gradient(#0000 0 2px, #4a5060 2px 3px), linear-gradient(#444a58 10%, #c4776a 12%, #c2ad58 40%, #6fb06a 70%, #55b0ac); }

.service {
  position: fixed; right: 29px; bottom: 89px; width: 75px; height: 75px; border-radius: 50%;
  background: #169f3d; color: #fff; box-shadow: 0 0 8px #0005;
}

.recorder { position: fixed; right: 0; bottom: 65px; width: 589px; height: 52px; padding: 0 4px 0 5px; background: #f2f6fe; display: flex; align-items: center; color: #333a4a; }
.recorder button { width: 36px; height: 36px; }
.recorder svg { width: 20px; height: 20px; fill: none; stroke: currentColor; stroke-width: 1.500; }
.rec-sep { width: 1px; height: 20px; background: #b9c0cc; margin: 0 9px; }
.rec-sep.last { margin-right: 16px; }
.recorder .red { color: #ee5b50; width: 44px; }
.recorder .red svg { width: 22px; height: 22px; }
.recorder .stop { margin-left: auto; width: 108px; height: 31px; background: #e9664c; color: #fff; border-radius: 4px; }

/* Taskbar */
.taskbar { height: 59px; display: grid; grid-template-columns: 1fr auto 1fr; align-items: center; background: #d3e6ef; }
.widgets { width: 30px; margin-left: 21px; }
.apps { display: flex; }
.app { position: relative; width: 47px; height: 50px; margin: 0 4px; border-radius: 5px; }
.app svg { width: 30px; height: 30px; }
.app.open { background: #e9f3f7; }
.app.alert { background: #fbe4e5; }
.app.open::after, .app.running::after, .app.alert::after { content: ""; position: absolute; bottom: 0; left: 50%; width: 8px; height: 4px; margin-left: -4px; border-radius: 2px; background: #7f8f99; }
.app.open::after { width: 20px; margin-left: -10px; background: #0f78d0; }
.app.alert::after { background: #c8402f; }
.office-text { font: 700 14px "Noto Sans", sans-serif; fill: #fff; }
.tray { display: flex; align-items: center; justify-content: flex-end; padding-right: 22px; color: #1a2a35; }
.tray svg { fill: none; stroke: #1a2a35; stroke-width: 1.500; }
.t-up { width: 18px; height: 18px; margin-right: 7px; }
.tray .t-ic { width: 20px; height: 22px; margin: 0 5px; stroke: none; }
.qq-red { color: #e3342b; }
.qq-gray { color: #7b858d; }
.qq-pink { color: #ff2ab0; }
.tray .t-mic { width: 18px; height: 22px; margin: 0 20px 0 12px; stroke: #1f5fa8; }
.ime { font-size: 18px; margin-right: 18px; }
.t-sys { width: 22px; height: 20px; margin: 0 4px; }
.clock { display: flex; flex-direction: column; align-items: flex-end; margin: 0 12px 0 14px; line-height: 20px; }
.t-moon { width: 18px; height: 20px; }
```
